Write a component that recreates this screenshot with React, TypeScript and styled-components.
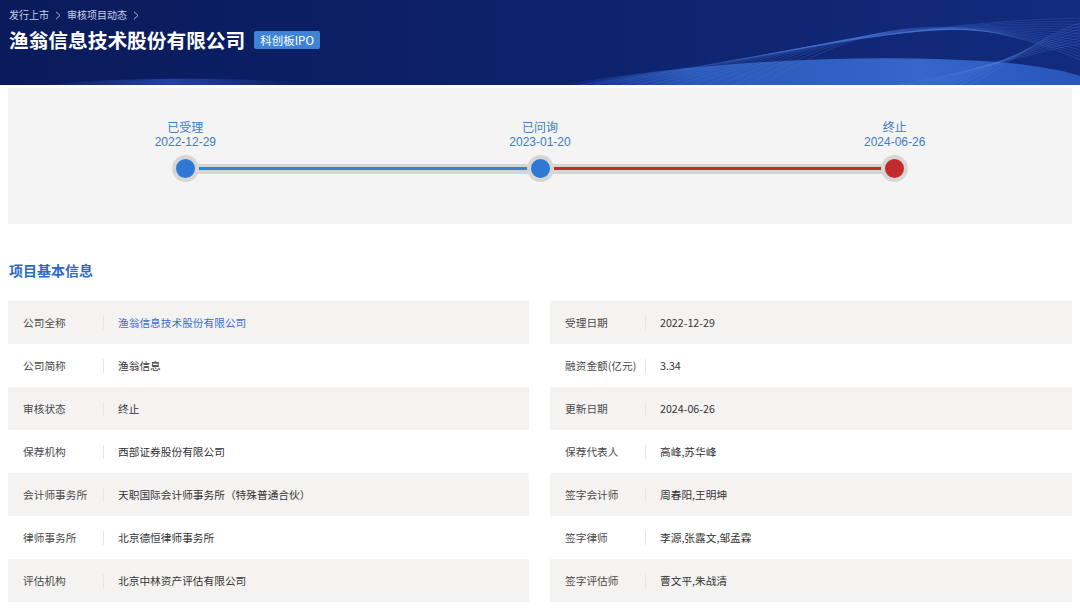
import styled, { createGlobalStyle } from "styled-components";

const GlobalStyle = createGlobalStyle`
  html, body {
    margin: 0;
    padding: 0;
    background: #ffffff;
    font-family: "Noto Sans CJK SC", "Noto Sans", "Liberation Sans", sans-serif;
  }
`;

const Page = styled.div`
  width: 1080px;
  height: 610px;
  overflow: hidden;
  background: #fff;
`;

const Header = styled.header`
  position: relative;
  height: 85px;
  padding: 7px 9px 0;
  box-sizing: border-box;
  background: linear-gradient(90deg, #0a1b5b 0%, #0d2169 45%, #132b7e 100%);
  overflow: hidden;
`;

const Waves = styled.svg`
  position: absolute;
  left: 0;
  top: 0;
  width: 1080px;
  height: 85px;
  pointer-events: none;
`;

const Crumbs = styled.div`
  position: relative;
  display: flex;
  align-items: center;
  gap: 5px;
  font-size: 10px;
  line-height: 16px;
  color: #c9d1ea;
`;

const Chevron = styled.svg`
  width: 6px;
  height: 9px;
  margin: 0 1px;
`;

const TitleRow = styled.div`
  position: relative;
  display: flex;
  align-items: center;
  gap: 9px;
  margin-top: 3px;
`;

const Title = styled.h1`
  margin: 0;
  font-size: 19.7px;
  font-weight: 700;
  line-height: 28px;
  color: #ffffff;
`;

const Badge = styled.span`
  display: inline-flex;
  align-items: center;
  height: 18px;
  padding: 0 6px;
  border-radius: 2px;
  background: #3e84d6;
  color: #ffffff;
  font-size: 11.5px;
`;

const TimelinePanel = styled.section`
  margin: 3px 8px 0;
  height: 136px;
  background: #f4f4f4;
  display: grid;
  grid-template-columns: repeat(3, 1fr);
  padding-top: 33px;
  box-sizing: border-box;
`;

const Step = styled.div`
  display: flex;
  flex-direction: column;
  align-items: stretch;
`;

const StepLabel = styled.div`
  text-align: center;
  font-family: "Liberation Sans", "Noto Sans CJK SC", sans-serif;
  font-size: 12px;
  line-height: 14px;
  color: #3d7bc6;
`;

const NodeRow = styled.div`
  display: flex;
  align-items: center;
  margin-top: 6px;
`;

const Segment = styled.div<{ $color?: string }>`
  flex: 1;
  height: 10px;
  background: ${(p) => (p.$color ? "#d4d4d2" : "transparent")};
  display: flex;
  align-items: center;
  margin: 0 -2px;

  &::after {
    content: "";
    flex: 1;
    height: 3px;
    background: ${(p) => p.$color || "transparent"};
  }
`;

const Dot = styled.div<{ $color: string }>`
  position: relative;
  z-index: 1;
  width: 19px;
  height: 19px;
  border-radius: 50%;
  background: ${(p) => p.$color};
  border: 4px solid #d6d6d4;
  flex: none;
`;

const SectionTitle = styled.h2`
  margin: 36px 0 0 9px;
  font-size: 14px;
  line-height: 20px;
  font-weight: 700;
  color: #2b6cc4;
`;

const InfoGrid = styled.div`
  margin: 21px 8px 0;
  display: grid;
  grid-template-columns: 521px 522px;
  column-gap: 21px;
`;

const Column = styled.div`
  display: flex;
  flex-direction: column;
`;

const Row = styled.div`
  height: 43px;
  display: flex;
  align-items: center;
  padding-left: 15px;
  font-size: 10.7px;

  &:nth-child(odd) {
    background: #f4f3f2;
  }
`;

const Label = styled.div`
  width: 80px;
  flex: none;
  color: #4a4a4a;
  white-space: nowrap;
`;

const Divider = styled.span`
  width: 1px;
  height: 14px;
  background: #e6e6e6;
  margin-right: 14px;
  flex: none;
`;

const Value = styled.div<{ $link?: boolean }>`
  color: ${(p) => (p.$link ? "#3a6fd0" : "#333333")};
  white-space: nowrap;
`;

type Item = { label: string; value: string; link?: boolean };

const left: Item[] = [
  { label: "公司全称", value: "渔翁信息技术股份有限公司", link: true },
  { label: "公司简称", value: "渔翁信息" },
  { label: "审核状态", value: "终止" },
  { label: "保荐机构", value: "西部证券股份有限公司" },
  { label: "会计师事务所", value: "天职国际会计师事务所（特殊普通合伙）" },
  { label: "律师事务所", value: "北京德恒律师事务所" },
  { label: "评估机构", value: "北京中林资产评估有限公司" },
];

const right: Item[] = [
  { label: "受理日期", value: "2022-12-29" },
  { label: "融资金额(亿元)", value: "3.34" },
  { label: "更新日期", value: "2024-06-26" },
  { label: "保荐代表人", value: "高峰,苏华峰" },
  { label: "签字会计师", value: "周春阳,王明坤" },
  { label: "签字律师", value: "李源,张露文,邹孟霖" },
  { label: "签字评估师", value: "曹文平,朱战清" },
];

const BLUE = "#2f78d6";
const RED = "#c42a2c";

const steps = [
  { name: "已受理", date: "2022-12-29", dot: BLUE, before: undefined, after: "#3a80d6" },
  { name: "已问询", date: "2023-01-20", dot: BLUE, before: "#3a80d6", after: "#bf2b2e" },
  { name: "终止", date: "2024-06-26", dot: RED, before: "#bf2b2e", after: undefined },
];

function Arrow() {
  return (
    <Chevron viewBox="0 0 6 9">
      <path d="M1 0.8 L5 4.5 L1 8.2" stroke="#aab4d6" strokeWidth="1" fill="none" />
    </Chevron>
  );
}

function HeaderWaves() {
  const lines = Array.from({ length: 14 }, (_, i) => i);
  return (
    <Waves viewBox="0 0 1080 85" preserveAspectRatio="none">
      <defs>
        <linearGradient id="hill" x1="0" y1="0" x2="1" y2="0">
          <stop offset="0" stopColor="#2a58b8" stopOpacity="0" />
          <stop offset="0.25" stopColor="#2d5ec0" stopOpacity="0.9" />
          <stop offset="0.7" stopColor="#3566c8" stopOpacity="1" />
          <stop offset="1" stopColor="#2a5ac0" stopOpacity="0.9" />
        </linearGradient>
        <linearGradient id="glow" x1="0" y1="0" x2="1" y2="0">
          <stop offset="0" stopColor="#3a6cd0" stopOpacity="0" />
          <stop offset="0.5" stopColor="#3a6cd0" stopOpacity="0.5" />
          <stop offset="1" stopColor="#3a6cd0" stopOpacity="0" />
        </linearGradient>
      </defs>
      <path d="M40 85 Q150 74 300 82 L300 85 Z" fill="url(#glow)" />
      <path
        d="M560 85 C700 62 860 52 1000 62 C1040 66 1070 72 1080 76 L1080 85 Z"
        fill="url(#hill)"
      />
      {lines.map((i) => (
        <path
          key={i}
          d={`M${580 + i * 14} 85 C${760 + i * 8} ${60 - i * 3} ${900 + i * 4} ${
            22 - i * 1.2
          } 1080 ${18 + i * 3.2}`}
          stroke="#4a7ad8"
          strokeOpacity={0.35}
          strokeWidth={0.8}
          fill="none"
        />
      ))}
      {lines.slice(0, 8).map((i) => (
        <path
          key={`b${i}`}
          d={`M${900 + i * 10} 85 C${980 + i * 6} ${70 - i * 2} 1040 ${50 - i * 2} 1080 ${
            44 - i * 3
          }`}
          stroke="#5a88e0"
          strokeOpacity={0.3}
          strokeWidth={0.8}
          fill="none"
        />
      ))}
    </Waves>
  );
}

export default function App() {
  return (
    <Page>
      <GlobalStyle />
      <Header>
        <HeaderWaves />
        <Crumbs>
          <span>发行上市</span>
          <Arrow />
          <span>审核项目动态</span>
          <Arrow />
        </Crumbs>
        <TitleRow>
          <Title>渔翁信息技术股份有限公司</Title>
          <Badge>科创板IPO</Badge>
        </TitleRow>
      </Header>

      <TimelinePanel>
        {steps.map((s) => (
          <Step key={s.name}>
            <StepLabel>
              {s.name}
              <br />
              {s.date}
            </StepLabel>
            <NodeRow>
              <Segment $color={s.before} />
              <Dot $color={s.dot} />
              <Segment $color={s.after} />
            </NodeRow>
          </Step>
        ))}
      </TimelinePanel>

      <SectionTitle>项目基本信息</SectionTitle>

      <InfoGrid>
        {[left, right].map((col, ci) => (
          <Column key={ci}>
            {col.map((it) => (
              <Row key={it.label}>
                <Label>{it.label}</Label>
                <Divider />
                <Value $link={it.link}>{it.value}</Value>
              </Row>
            ))}
          </Column>
        ))}
      </InfoGrid>
    </Page>
  );
}
